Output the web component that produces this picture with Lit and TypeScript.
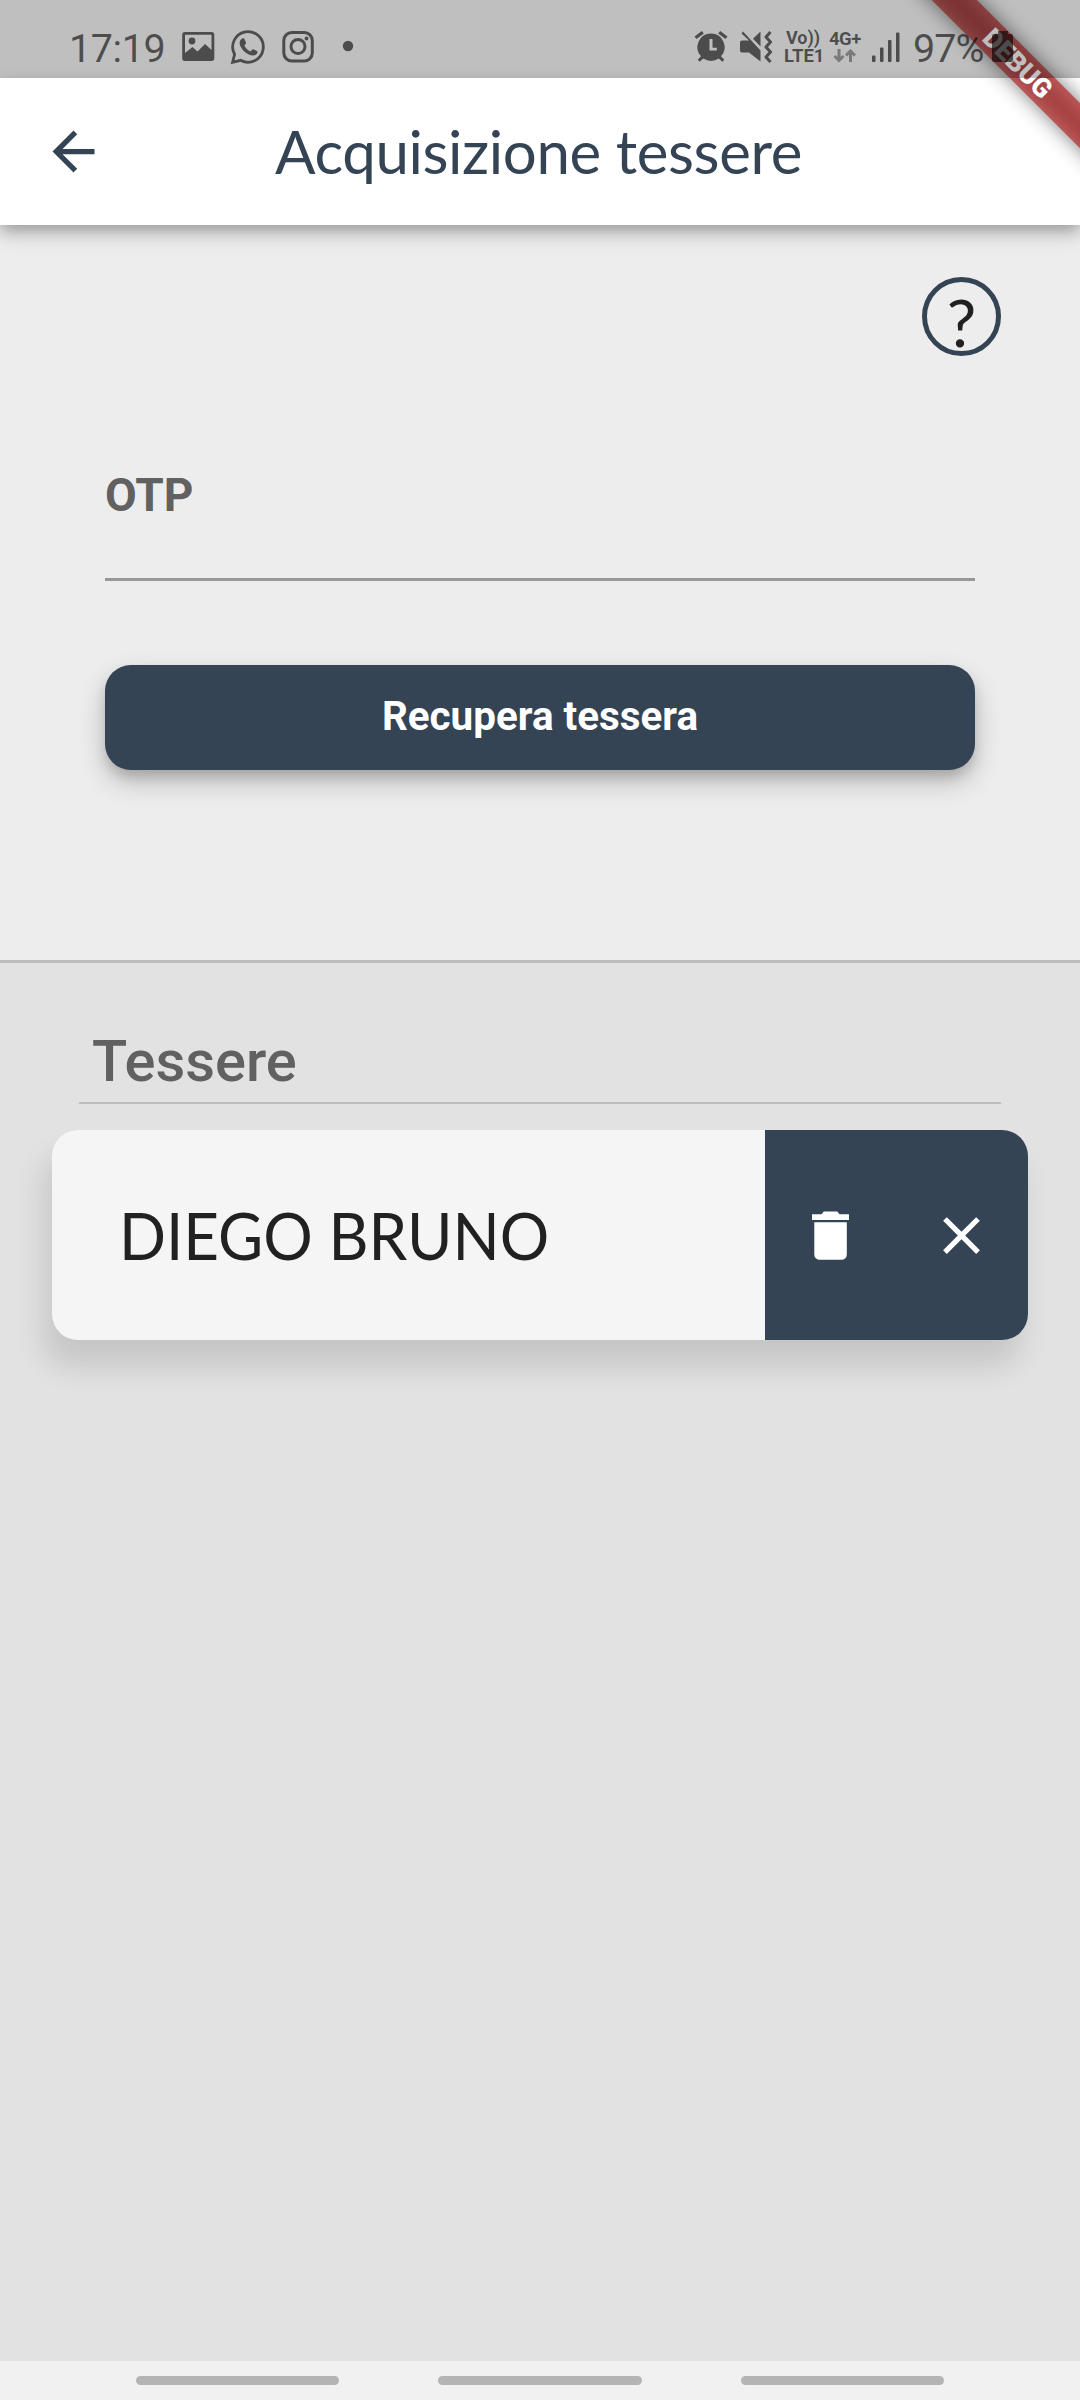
import { LitElement, html, css, svg } from "lit";
import { customElement, property } from "lit/decorators.js";

@customElement("status-bar")
class StatusBar extends LitElement {
  static styles = css`
    :host {
      position: relative;
      z-index: 3;
      display: block;
      height: 78px;
      background: rgba(0, 0, 0, 0.25);
      color: rgba(0, 0, 0, 0.6);
      font-family: Roboto, sans-serif;
    }
    .bar {
      display: flex;
      align-items: flex-start;
      box-sizing: border-box;
      width: 1080px;
      padding: 24px 66px 0 69px;
    }
    .num {
      font-size: 39.5px;
      line-height: 46px;
      padding-top: 1.5px;
      white-space: nowrap;
    }
    .time { width: 113px; letter-spacing: -0.4px; }
    .percent { width: 79px; margin-left: 11px; letter-spacing: -1px; }
    .grow { flex: 1; }
    svg { display: block; flex: none; }
    .net {
      display: flex;
      flex-direction: column;
      font-weight: 700;
      font-size: 18.5px;
      line-height: 18px;
      padding-top: 5px;
      white-space: nowrap;
    }
    .volte { width: 46px; padding-left: 12px; }
    .vo { padding-left: 2px; font-size: 18px; }
    .g4 { width: 43px; font-size: 18.5px; padding-top: 6px; margin-left: -1px; letter-spacing: -0.5px; }
    .g4 svg { margin: 1px 0 0 1px; }
  `;

  render() {
    return html`
      <div class="bar">
        <span class="num time">17:19</span>
        <svg width="34" height="46" viewBox="182 24 34 46" fill="currentColor">
          <path fill-rule="evenodd" d="M185 32h26.500a2.800 2.800 0 0 1 2.800 2.800v23.400a2.800 2.800 0 0 1-2.800 2.800H185a2.800 2.800 0 0 1-2.800-2.800V34.800A2.800 2.800 0 0 1 185 32zM185 34.800V53l7.500-6 5 4.500 7.500-7.500 6.500 6V34.800z"/>
          <circle cx="192" cy="41" r="3.400"/>
        </svg>
        <svg width="50" height="46" viewBox="216 24 50 46" fill="none" stroke="currentColor">
          <path stroke-width="2.800" d="M232.600 62.300l2-8a15.300 15.300 0 1 1 6 6z"/>
          <path fill="currentColor" stroke="none" d="M241.500 39c1.500-1.300 2.700-.7 3.200.5l1.200 3c.3 1-.2 1.700-1.500 3 1.300 2.800 3.300 4.700 6.200 6 1.400-1.700 2-2.500 3.200-2l3 1.500c1.200.6.8 2-.2 3-2 2-5 1.800-8.300.2-4-1.900-6.800-5-8.200-8.600-.9-2.700-.4-5.200 1.400-6.600z"/>
        </svg>
        <svg width="50" height="46" viewBox="266 24 50 46" fill="none" stroke="currentColor" stroke-width="3">
          <rect x="283.800" y="32.500" width="28.500" height="28.500" rx="8"/>
          <circle cx="298" cy="46.500" r="7"/>
          <circle cx="306.500" cy="38.500" r="1.900" fill="currentColor" stroke="none"/>
        </svg>
        <svg width="40" height="46" viewBox="316 24 40 46" fill="currentColor"><circle cx="348" cy="46" r="5.200"/></svg>
        <span class="grow"></span>
        <svg width="80" height="46" viewBox="692 24 80 46">
          <path fill="currentColor" fill-rule="evenodd" d="M711 33.500a13.600 13.600 0 0 1 10 22.800l3.300 3.500-2 2-3.600-3.300a13.600 13.600 0 0 1-15.400 0l-3.600 3.300-2-2 3.300-3.500A13.600 13.600 0 0 1 711 33.500zM709.500 39v11.500h7.300v-2.700h-4.300V39z"/>
          <path fill="none" stroke="currentColor" stroke-width="3.300" d="M695.500 37.800l7.300-5.500M719.200 32.300l7.300 5.500"/>
          <path fill="currentColor" d="M743 31.500l17.500 19v11L749 52.500h-7q-2 0-2-2v-8q0-2 2-2h7l-7.500-7zM760.500 31.500v15l-7.500-7.800z"/>
          <path fill="none" stroke="currentColor" stroke-width="3" stroke-linejoin="round" d="M770.500 32l-4.500 5 4.500 5-4.500 5 4.500 5-4.500 5 4.500 5"/>
        </svg>
        <div class="net volte"><span class="vo">Vo))</span><span>LTE1</span></div>
        <div class="net g4">
          <span>4G+</span>
          <svg width="28" height="16" viewBox="0 0 28 16" fill="none" stroke="currentColor" stroke-width="3" opacity="0.6">
            <path d="M9 0v11M4.500 7L9 11.500 13.500 7M20.500 13V3M16 6.500L20.500 2 25 6.500"/>
          </svg>
        </div>
        <svg width="30" height="46" viewBox="872 24 30 46" fill="currentColor">
          <rect x="872" y="55.500" width="3.500" height="6.500" rx="1"/>
          <rect x="880" y="47.500" width="3.500" height="14.500" rx="1"/>
          <rect x="888" y="40" width="3.500" height="22" rx="1"/>
          <rect x="896" y="32.500" width="3.500" height="29.500" rx="1"/>
        </svg>
        <span class="num percent">97%</span>
        <svg width="22" height="46" viewBox="991 24 22 46" fill="currentColor">
          <path d="M997 31h10v3h3q2 0 2 2v24q0 2-2 2h-17q-2 0-2-2V36q0-2 2-2h4z"/>
        </svg>
      </div>
    `;
  }
}

@customElement("debug-ribbon")
class DebugRibbon extends LitElement {
  static styles = css`
    :host {
      position: absolute;
      z-index: 2;
      top: 0;
      right: 0;
      width: 220px;
      height: 220px;
      pointer-events: none;
    }
    svg { display: block; }
    text { font: 900 26.800px Roboto, sans-serif; }
  `;

  render() {
    return html`
      <svg width="220" height="220" viewBox="860 0 220 220">
        <defs>
          <filter id="soft" x="-50%" y="-200%" width="200%" height="500%">
            <feGaussianBlur stdDeviation="10"/>
          </filter>
        </defs>
        <g transform="translate(1016.700 62.300) rotate(45)">
          <rect x="-160" y="-16" width="320" height="32" fill="#000" fill-opacity=".5" filter="url(#soft)"/>
          <rect x="-160" y="-16" width="320" height="32" fill="#b71c1c" fill-opacity=".63"/>
          <text x="1.500" y="9.300" text-anchor="middle" fill="#fff">DEBUG</text>
        </g>
      </svg>
    `;
  }
}

@customElement("card-row")
class CardRow extends LitElement {
  @property() name = "";

  static styles = css`
    :host {
      display: flex;
      height: 210px;
      margin: 26px 52.500px 0 52px;
      border-radius: 26px;
      background: #f5f5f5;
      box-shadow: -8px 26px 30px rgba(0, 0, 0, 0.125);
    }
    .name {
      flex: 1;
      display: flex;
      align-items: center;
      padding: 0 0 1px 66.500px;
    }
    .label {
      font: 400 65.500px/80px Lato, sans-serif;
      color: #212121;
      white-space: nowrap;
      transform: scaleX(0.944);
      transform-origin: 0 50%;
    }
    .actions {
      display: grid;
      grid-template-columns: 1fr 1fr;
      place-items: center;
      width: 263px;
      background: #344455;
      border-radius: 0 26px 26px 0;
    }
    svg { display: block; }
  `;

  render() {
    return html`
      <div class="name"><span class="label">${this.name}</span></div>
      <div class="actions">
        <svg width="63" height="63" viewBox="0 0 63 63" fill="#fff">
          <path d="M13 10.200h9.500l2.300-2.700h13.500l2.300 2.700H50V16H13zM15.300 18.200h32.500V50.500a5.300 5.300 0 0 1-5.300 5.300H20.600a5.300 5.300 0 0 1-5.300-5.300z"/>
        </svg>
        <svg width="63" height="63" viewBox="0 0 24 24" fill="#fff">
          <path d="M19 6.410L17.590 5 12 10.590 6.410 5 5 6.410 10.590 12 5 17.590 6.410 19 12 13.410 17.590 19 19 17.590 13.410 12z"/>
        </svg>
      </div>
    `;
  }
}

@customElement("app-root")
class AppRoot extends LitElement {
  static styles = css`
    :host {
      position: relative;
      display: flex;
      flex-direction: column;
      width: 1080px;
      height: 2400px;
      overflow: hidden;
      background: #fff;
      font-family: Roboto, sans-serif;
    }
    .header {
      position: relative;
      z-index: 1;
      display: grid;
      grid-template-columns: 148px 1fr 148px;
      align-items: center;
      flex: none;
      height: 147px;
      background: #fff;
      color: #344455;
      box-shadow: 0 6px 12px -1px rgba(0, 0, 0, 0.2), 0 9px 20px rgba(0, 0, 0, 0.18);
    }
    .header svg { display: block; margin-left: 42px; }
    .title {
      text-align: center;
      font: 400 60px/72px Lato, sans-serif;
      letter-spacing: -0.400px;
      padding: 0 3px 1px 0;
      white-space: nowrap;
    }
    .form {
      flex: none;
      display: flex;
      flex-direction: column;
      box-sizing: border-box;
      height: 735px;
      padding: 52px 105px 0;
      background: #ededed;
    }
    .help {
      align-self: flex-end;
      box-sizing: border-box;
      width: 79px;
      height: 79px;
      margin-right: -26px;
      border: 5px solid #344455;
      border-radius: 50%;
      text-align: center;
      font: 400 66px/80px Lato, sans-serif;
      color: #212121;
    }
    .otp {
      box-sizing: border-box;
      height: 225px;
      padding-top: 111.500px;
      border-bottom: 3px solid #989898;
      font-weight: 700;
      font-size: 46px;
      line-height: 54px;
      color: #616161;
    }
    .submit {
      height: 105px;
      margin-top: 84px;
      border: 0;
      border-radius: 26px;
      background: #344455;
      color: #fff;
      font: 700 40.400px/102px Roboto, sans-serif;
      padding: 0 0 2px;
      box-shadow: 0 8px 14px -2px rgba(0, 0, 0, 0.18), 0 12px 28px rgba(0, 0, 0, 0.2);
    }
    .list {
      flex: 1;
      border-top: 3px solid #bcbcbc;
      background: #e2e2e2;
    }
    .heading {
      box-sizing: border-box;
      height: 141px;
      margin: 0 79px;
      padding: 63px 0 0 13px;
      border-bottom: 2px solid #bdbdbd;
      font-weight: 500;
      font-size: 57.800px;
      line-height: 70px;
      color: #616161;
    }
    .nav {
      flex: none;
      display: flex;
      justify-content: center;
      gap: 99px;
      box-sizing: border-box;
      height: 39px;
      padding-top: 15px;
      background: #f1f1f1;
    }
    .pill {
      width: 203.500px;
      height: 9px;
      border-radius: 5px;
      background: #b4b4b4;
    }
  `;

  render() {
    return html`
      <status-bar></status-bar>
      <debug-ribbon></debug-ribbon>
      <div class="header">
        <svg width="63" height="63" viewBox="0 0 24 24" fill="currentColor">
          ${svg`<path d="M20 11H7.830l5.590-5.590L12 4l-8 8 8 8 1.410-1.410L7.830 13H20v-2z"/>`}
        </svg>
        <div class="title">Acquisizione tessere</div>
      </div>
      <div class="form">
        <div class="help">?</div>
        <div class="otp">OTP</div>
        <button class="submit">Recupera tessera</button>
      </div>
      <div class="list">
        <div class="heading">Tessere</div>
        <card-row name="DIEGO BRUNO"></card-row>
      </div>
      <div class="nav">
        <div class="pill"></div>
        <div class="pill"></div>
        <div class="pill"></div>
      </div>
    `;
  }
}
